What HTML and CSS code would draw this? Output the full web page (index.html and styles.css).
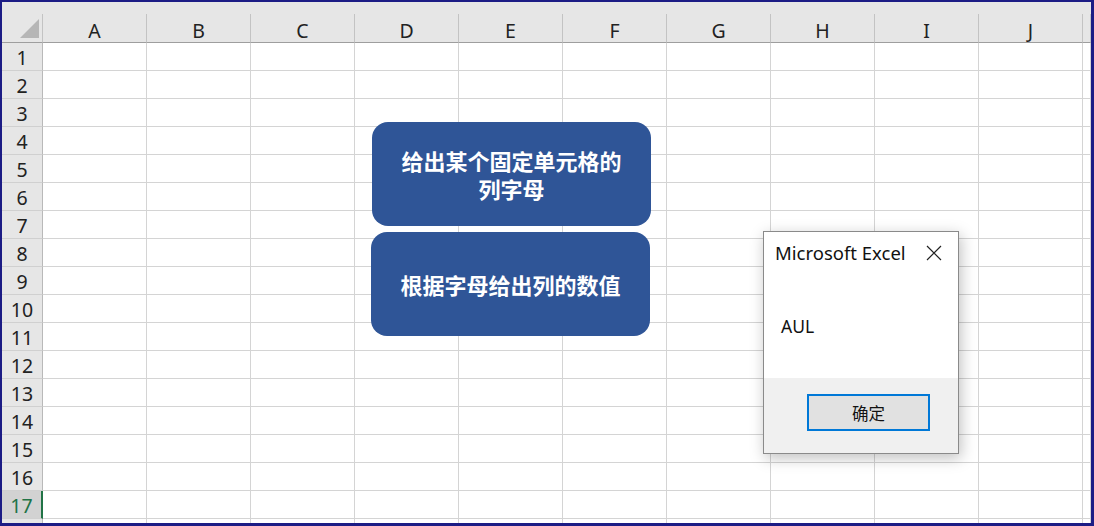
FILE: index.html
```html
<!DOCTYPE html>
<html lang="zh-CN">
<head>
<meta charset="UTF-8">
<title>Excel - 列字母</title>
<link rel="stylesheet" href="styles.css">
</head>
<body>

<div class="frame">
    <div class="ribbon-edge"></div>
    <div class="sheet" id="sheet">
        <div class="corner"><span class="tri"></span></div>
    </div>

    <div class="shape shape-top">
        <span class="shape-line">给出某个固定单元格的</span>
        <span class="shape-line">列字母</span>
    </div>
    <div class="shape shape-bottom">
        <span class="shape-line">根据字母给出列的数值</span>
    </div>

    <div class="msgbox">
        <div class="msg-title">
            <span>Microsoft Excel</span>
            <svg class="msg-close" width="16" height="16" viewBox="0 0 16 16">
                <path d="M1 1 L15 15 M15 1 L1 15" stroke="#222" stroke-width="1.2" fill="none"/>
            </svg>
        </div>
        <div class="msg-body">AUL</div>
        <div class="msg-footer">
            <button class="msg-ok">确定</button>
        </div>
    </div>
</div>

<script>
var sheet = document.getElementById("sheet");
var cols = ["A", "B", "C", "D", "E", "F", "G", "H", "I", "J", ""];

cols.forEach(function (c) {
    var h = document.createElement("div");
    h.className = "colhead";
    h.textContent = c;
    sheet.appendChild(h);
});

// row 18 only peeks in under the frame, so no number for it
for (var r = 1; r <= 18; r++) {
    var rh = document.createElement("div");
    rh.className = r === 17 ? "rowhead active" : "rowhead";
    rh.textContent = r < 18 ? r : "";
    sheet.appendChild(rh);
    for (var i = 0; i < cols.length; i++) {
        var cell = document.createElement("div");
        cell.className = "cell";
        sheet.appendChild(cell);
    }
}
</script>

</body>
</html>
```

FILE: styles.css
```css
body {
    margin: 0;
    font-family: "Noto Sans", "Noto Sans CJK SC", sans-serif;
    background: #fff;
}
.frame {
    position: relative;
    width: 1094px;
    height: 526px;
    box-sizing: border-box;
    border: 2px solid #1c1c85;
    border-right-width: 3px;
    border-bottom-width: 3px;
    overflow: hidden;
    background: #fff;
}
.ribbon-edge {
    height: 12px;
    background: #e6e6e6;
}
.sheet {
    display: grid;
    grid-template-columns: 41px repeat(10, 104px) 1fr;
    grid-template-rows: 29px;
    grid-auto-rows: 28px;
}
.corner {
    background: #e6e6e6;
    border-right: 1px solid #c3c3c3;
    border-bottom: 1px solid #9e9e9e;
    position: relative;
}
.tri {
    position: absolute;
    right: 3px;
    bottom: 4px;
    width: 0;
    height: 0;
    border-left: 19px solid transparent;
    border-bottom: 19px solid #b6b6b6;
}
.colhead {
    background: #e6e6e6;
    border-right: 1px solid #c3c3c3;
    border-bottom: 1px solid #9e9e9e;
    display: flex;
    align-items: center;
    justify-content: center;
    padding-top: 5px;
    font-size: 19.5px;
    color: #222;
}
.rowhead {
    background: #e6e6e6;
    border-right: 1px solid #b9b9b9;
    border-bottom: 1px solid #d0d0d0;
    display: flex;
    align-items: center;
    justify-content: center;
    padding-top: 1px;
    font-size: 19.5px;
    color: #222;
}
.rowhead.active {
    background: #d2d2d2;
    color: #217346;
    border-right: 2px solid #217346;
}
.cell {
    border-right: 1px solid #d4d4d4;
    border-bottom: 1px solid #d4d4d4;
}
.shape {
    position: absolute;
    width: 279px;
    height: 104px;
    box-sizing: border-box;
    border-radius: 16px;
    background: #2f5597;
    color: #fff;
    font-family: "Noto Sans CJK SC", sans-serif;
    font-weight: bold;
    font-size: 22px;
    display: flex;
    flex-direction: column;
    align-items: center;
    justify-content: center;
    text-align: center;
}
.shape-line {
    display: block;
    height: 28px;
    line-height: 28px;
    overflow: visible;
}
.shape-top {
    left: 370px;
    top: 120px;
}
.shape-bottom {
    left: 369px;
    top: 230px;
}
.msgbox {
    position: absolute;
    left: 761px;
    top: 229px;
    width: 196px;
    height: 223px;
    box-sizing: border-box;
    border: 1px solid #8a8a8a;
    background: #fff;
    box-shadow: 2px 4px 14px rgba(0, 0, 0, 0.25);
    display: flex;
    flex-direction: column;
}
.msg-title {
    display: flex;
    align-items: center;
    justify-content: space-between;
    height: 41px;
    padding: 0 16px 0 11px;
    font-family: "Noto Sans", sans-serif;
    font-size: 18.5px;
    color: #111;
}
.msg-body {
    flex: 1;
    padding: 41px 0 0 17px;
    font-size: 17.5px;
    color: #111;
}
.msg-footer {
    height: 75px;
    background: #f0f0f0;
    display: flex;
    align-items: flex-start;
    padding-top: 16px;
    box-sizing: border-box;
}
.msg-ok {
    margin-left: 43px;
    width: 123px;
    height: 37px;
    border: 2px solid #0078d7;
    background: #e1e1e1;
    font-family: "Noto Sans CJK SC", sans-serif;
    font-size: 16.5px;
    color: #111;
    padding: 0;
}
```
